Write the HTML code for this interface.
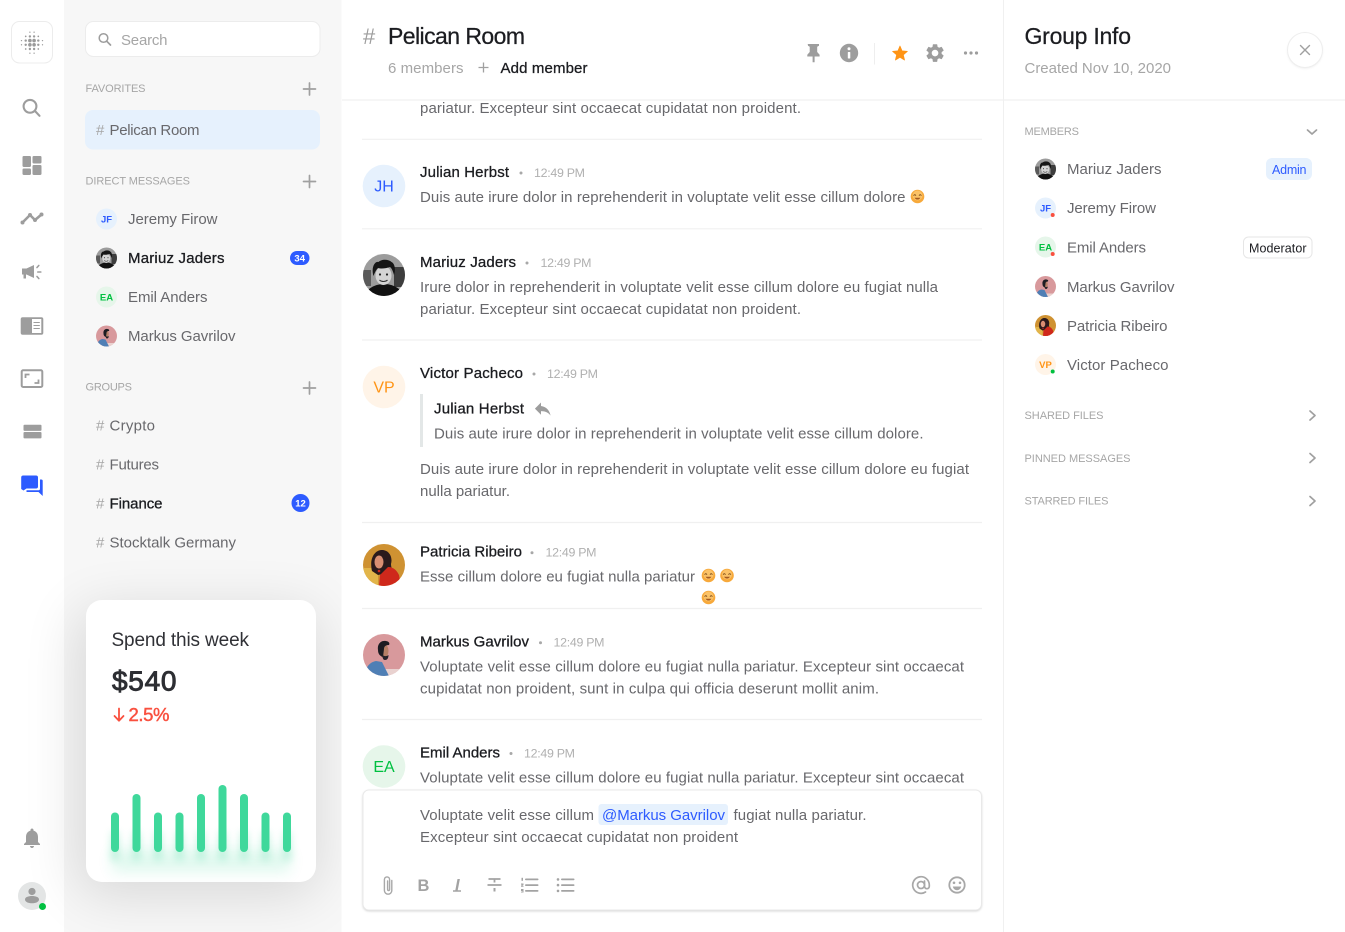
<!DOCTYPE html>
<html lang="en">
<head>
<meta charset="utf-8">
<title>Pelican Room</title>
<style>
html,body{margin:0;padding:0;background:#fff;width:1345px;height:932px;overflow:hidden}
svg{display:block}
text{font-family:"Liberation Sans",sans-serif;white-space:pre}
.b{font-size:15px;fill:#68686c}
.n{font-size:15px;fill:#1b1c20;stroke:#1b1c20;stroke-width:.3}
.t{font-size:12.4px;fill:#b0b0b0}
.l{font-size:11px;fill:#a6a6a6}
.g{font-size:15px;fill:#a6a6a6}
.h{font-size:23px;fill:#1b1c20;stroke:#1b1c20;stroke-width:.25}
.i{fill:#9d9d9d}
.s{fill:none;stroke:#9d9d9d;stroke-width:2.100;stroke-linecap:round;stroke-linejoin:round}
.p{fill:none;stroke:#a0a0a0;stroke-width:1.700;stroke-linecap:round}
.sep{stroke:#f0f0f0;stroke-width:1.2}
.dot{fill:#a8a8a8}
.a{font-size:9.500px;font-weight:bold;text-anchor:middle}
.av{font-size:16px;text-anchor:middle}
</style>
</head>
<body>
<svg width="1345" height="932" viewBox="0 0 1345 932" xmlns="http://www.w3.org/2000/svg">
<defs>
  <filter id="cs" filterUnits="userSpaceOnUse" x="-100" y="420" width="700" height="700"><feGaussianBlur stdDeviation="28"/></filter>
  <filter id="gl" filterUnits="userSpaceOnUse" x="60" y="760" width="280" height="160"><feGaussianBlur stdDeviation="7"/></filter>
  <filter id="gs" filterUnits="userSpaceOnUse" x="60" y="760" width="280" height="160"><feGaussianBlur stdDeviation="4"/></filter>
  <filter id="cp" filterUnits="userSpaceOnUse" x="340" y="770" width="660" height="160"><feGaussianBlur stdDeviation="1.2"/></filter>
  <filter id="cb" filterUnits="userSpaceOnUse" x="1270" y="20" width="70" height="70"><feGaussianBlur stdDeviation="1.2"/></filter>
  <clipPath id="cc"><rect x="86" y="600" width="230" height="282" rx="16"/></clipPath>
  <clipPath id="ca"><circle cx="21" cy="21" r="21"/></clipPath>
  <symbol id="mj" viewBox="0 0 42 42"><g clip-path="url(#ca)">
    <rect width="42" height="42" fill="#9c9c9c"/>
    <rect x="31" y="13" width="11" height="20" fill="#3d3d3d"/>
    <rect x="0" y="16" width="8" height="16" fill="#5a5a5a"/>
    <ellipse cx="21" cy="45" rx="20" ry="15" fill="#111"/>
    <ellipse cx="20.500" cy="21.500" rx="8" ry="9.500" fill="#d4d4d4"/>
    <path d="M10.500 22c-2.500-8 1-15 5-14 3-3 10-3 13 0 4 2 4 9 2.500 13-1-4-2.500-7-4-8-4 1.500-9 2-12 1-2 2-3.500 5-4.500 8z" fill="#151515"/>
    <circle cx="17" cy="20.500" r="1.100" fill="#222"/><circle cx="24" cy="20.500" r="1.100" fill="#222"/>
    <path d="M16.500 26c2 2 6 2 8 0" fill="none" stroke="#333" stroke-width="1.100"/>
  </g></symbol>
  <symbol id="mg" viewBox="0 0 42 42"><g clip-path="url(#ca)">
    <rect width="42" height="42" fill="#d8999c"/>
    <rect y="35" width="42" height="7" fill="#e9d2d0"/>
    <path d="M2 42c0-9 5-14 11-15l6 1 7 14z" fill="#4f7fb5"/>
    <ellipse cx="21" cy="17" rx="4.500" ry="7" fill="#b57f66"/>
    <path d="M15 16c-1-6 3-10 8-9 3 .5 4 2 3 4-3.500 0-5 1.500-5 4l-1 8c-3-1-5-3-5-7z" fill="#1c1c22"/>
    <path d="M19.500 21c2 1.500 4 1.500 6 0 0 3.500-1.500 5-3.500 5s-2.500-2-2.500-5z" fill="#26222a"/>
  </g></symbol>
  <symbol id="pr" viewBox="0 0 42 42"><g clip-path="url(#ca)">
    <rect width="42" height="42" fill="#cf9232"/>
    <rect x="0" y="24" width="15" height="18" fill="#e2b54a"/>
    <path d="M9 27C6 14 12 6 19 6s11 7 9 14c0 4 2 6 1 8l-14 3z" fill="#2b1a1c"/>
    <ellipse cx="16" cy="18" rx="4.500" ry="6.500" fill="#d98e72"/>
    <path d="M16 42l1-11 8-8c6 0 9 4 11 8l2 11z" fill="#cf281b"/>
    <circle cx="16" cy="27" r="1.300" fill="#cf281b"/>
  </g></symbol>
  <symbol id="em" viewBox="0 0 14 14">
    <circle cx="7" cy="7" r="6.800" fill="#f7a93b"/>
    <circle cx="7" cy="6" r="5" fill="#fbc267"/>
    <path d="M3.300 5.900c.5-1 1.500-1 2 0M8.700 5.900c.5-1 1.500-1 2 0" fill="none" stroke="#7a4a18" stroke-width=".9" stroke-linecap="round"/>
    <path d="M4 8.200c1.500 2.400 4.500 2.400 6 0z" fill="#a45a20"/>
  </symbol>
</defs>

<!-- backgrounds -->
<rect width="1345" height="932" fill="#fff"/>
<rect x="64" width="277.500" height="932" fill="#f7f7f7"/>
<!-- card shadow -->
<rect x="78" y="610" width="240" height="285" rx="20" fill="#000" opacity=".125" filter="url(#cs)"/>
<rect x="341.500" width="662" height="932" fill="#fff"/>
<rect x="1003.500" width="342" height="932" fill="#fff"/>
<line x1="1003.500" y1="0" x2="1003.500" y2="932" stroke="#f0f0f0"/>
<line x1="342" y1="100" x2="1345" y2="100" stroke="#f0f0f0" stroke-width="1.300"/>

<!-- rail -->
<rect x="11.500" y="21.500" width="41" height="41.500" rx="8" fill="#fff" stroke="#ececec"/>
<g fill="#9a9a9a">
  <circle cx="29.900" cy="40.600" r="1.800"/><circle cx="34.100" cy="40.600" r="1.800"/><circle cx="29.900" cy="44.800" r="1.800"/><circle cx="34.100" cy="44.800" r="1.800"/>
  <circle cx="25.700" cy="40.600" r="1.200"/><circle cx="38.300" cy="40.600" r="1.200"/><circle cx="25.700" cy="44.800" r="1.200"/><circle cx="38.300" cy="44.800" r="1.200"/>
  <circle cx="29.900" cy="36.400" r="1.200"/><circle cx="34.100" cy="36.400" r="1.200"/><circle cx="29.900" cy="49" r="1.200"/><circle cx="34.100" cy="49" r="1.200"/>
  <circle cx="25.700" cy="36.400" r=".85"/><circle cx="38.300" cy="36.400" r=".85"/><circle cx="25.700" cy="49" r=".85"/><circle cx="38.300" cy="49" r=".85"/>
  <circle cx="21.500" cy="40.600" r=".65"/><circle cx="42.500" cy="40.600" r=".65"/><circle cx="21.500" cy="44.800" r=".65"/><circle cx="42.500" cy="44.800" r=".65"/>
  <circle cx="29.900" cy="32.200" r=".65"/><circle cx="34.100" cy="32.200" r=".65"/><circle cx="29.900" cy="53.200" r=".65"/><circle cx="34.100" cy="53.200" r=".65"/>
</g>
<!-- search -->
<circle cx="30" cy="106.300" r="6.400" class="s"/><line x1="35" y1="111" x2="39.500" y2="115.800" class="s"/>
<!-- dashboard -->
<g class="i"><rect x="22.500" y="156" width="8.500" height="11" rx="1.200"/><rect x="32.500" y="156" width="9" height="7.500" rx="1.200"/><rect x="22.500" y="168.500" width="8.500" height="6.500" rx="1.200"/><rect x="32.500" y="165" width="9" height="10" rx="1.200"/></g>
<!-- trend -->
<polyline points="22.500,222.500 30,215 35,220 41.500,214.500" fill="none" stroke="#9d9d9d" stroke-width="2.600" stroke-linejoin="round"/>
<g class="i"><circle cx="22.500" cy="222.500" r="2"/><circle cx="30" cy="215" r="2"/><circle cx="35" cy="220" r="2"/><circle cx="41.500" cy="214.500" r="2"/></g>
<!-- megaphone -->
<path d="M22 268.500h4.500l7.500-3.500v13l-7.500-3.500h-.5v4h-2.500v-4h-1.500z" class="i"/>
<path d="M37 267.500l1.800-2M37.800 272h3M37 276.500l1.800 2" fill="none" stroke="#9d9d9d" stroke-width="1.600" stroke-linecap="round"/>
<!-- panel -->
<rect x="20.700" y="317.300" width="22.600" height="17.400" rx="2" class="i"/>
<rect x="32" y="319" width="9.300" height="14" fill="#fff"/>
<path d="M33.500 322.500h6.300M33.500 325.500h6.300M33.500 328.500h6.300" stroke="#9d9d9d" stroke-width="1.100"/>
<!-- frame -->
<rect x="21.700" y="370.300" width="20.600" height="16.700" rx="1.500" fill="none" stroke="#9d9d9d" stroke-width="2"/>
<path d="M25.500 378v-3.500h4M38.500 379.500v3.500h-4" fill="none" stroke="#9d9d9d" stroke-width="1.800"/>
<!-- stack -->
<rect x="23.500" y="424.700" width="18" height="6.200" rx="1" class="i"/><rect x="23.500" y="432" width="18" height="6.400" rx="1" class="i"/>
<!-- chat -->
<path d="M23.500 475.500h12.500a2 2 0 0 1 2 2v9a2 2 0 0 1-2 2h-9.500l-3 2-2.300-1.500v-11.500a2 2 0 0 1 2-2z" fill="#2d5bff"/>
<path d="M40 479.500h1.300a1.400 1.400 0 0 1 1.400 1.400V496l-4.200-4H26.500v-1.700h11.800a1.700 1.700 0 0 0 1.700-1.700z" fill="#2d5bff"/>
<!-- bell -->
<path transform="translate(20 826)" class="i" d="M12 22c1.100 0 2-.9 2-2h-4c0 1.100.89 2 2 2zm6-6v-5c0-3.070-1.640-5.640-4.500-6.320V4c0-.83-.67-1.500-1.500-1.500s-1.500.67-1.500 1.500v.68C7.630 5.360 6 7.920 6 11v5l-2 2v1h16v-1l-2-2z"/>
<!-- profile -->
<circle cx="32" cy="896" r="14" fill="#e3e5e5"/>
<circle cx="32" cy="891.500" r="3.600" class="i"/><path d="M25 899.500c0-2.500 3.500-3.500 7-3.500s7 1 7 3.500-3.500 3.800-7 3.800-7-1.300-7-3.800z" class="i"/>
<circle cx="42.500" cy="906.500" r="3.500" fill="#00c040"/>

<!-- sidebar -->
<rect x="85.500" y="21.500" width="234.500" height="35" rx="8" fill="#fff" stroke="#ececec"/>
<circle cx="103.500" cy="38" r="4.300" fill="none" stroke="#9d9d9d" stroke-width="1.500"/><line x1="106.800" y1="41.300" x2="110.500" y2="45" stroke="#9d9d9d" stroke-width="1.700" stroke-linecap="round"/>
<text x="121" y="44.800" textLength="46.500" class="g">Search</text>

<text x="85.500" y="92" textLength="60" class="l">FAVORITES</text>
<path d="M303.500 89h12M309.500 83v12" class="p"/>
<rect x="85" y="110" width="235" height="39.500" rx="8" fill="#e6f1fd"/>
<text x="96" y="135" textLength="8.500" class="g">#</text>
<text x="109.500" y="135" textLength="90" class="b">Pelican Room</text>

<text x="85.500" y="184.600" textLength="104.500" class="l">DIRECT MESSAGES</text>
<path d="M303.500 181.500h12M309.500 175.500v12" class="p"/>
<circle cx="106.500" cy="219" r="10.500" fill="#e6f1fd"/><text x="106.500" y="222.300" class="a" fill="#2d5bff">JF</text>
<text x="128" y="224" textLength="89.500" class="b">Jeremy Firow</text>
<use href="#mj" x="96" y="247.500" width="21" height="21"/>
<text x="128" y="263" textLength="96.500" class="n">Mariuz Jaders</text>
<rect x="290" y="251" width="19.500" height="14" rx="7" fill="#2d5bff"/><text x="299.700" y="261.300" class="a" fill="#fff">34</text>
<circle cx="106.500" cy="297" r="10.500" fill="#e6f6ea"/><text x="106.500" y="300.300" class="a" fill="#00c040">EA</text>
<text x="128" y="302" textLength="79.500" class="b">Emil Anders</text>
<use href="#mg" x="96" y="325.500" width="21" height="21"/>
<text x="128" y="341" textLength="107.500" class="b">Markus Gavrilov</text>

<text x="85.500" y="390.600" textLength="46.500" class="l">GROUPS</text>
<path d="M303.500 388h12M309.500 382v12" class="p"/>
<text x="96" y="430.300" textLength="8.500" class="g">#</text><text x="96" y="469.400" textLength="8.500" class="g">#</text><text x="96" y="508.500" textLength="8.500" class="g">#</text><text x="96" y="547.600" textLength="8.500" class="g">#</text>
<text x="109.500" y="430.300" textLength="45.500" class="b">Crypto</text>
<text x="109.500" y="469.400" textLength="49.500" class="b">Futures</text>
<text x="109.500" y="508.500" textLength="53" class="n">Finance</text>
<circle cx="300.500" cy="503" r="9" fill="#2d5bff"/><text x="300.500" y="506.300" class="a" fill="#fff">12</text>
<text x="109.500" y="547.600" textLength="126.500" class="b">Stocktalk Germany</text>

<!-- card -->
<rect x="86" y="600" width="230" height="282" rx="16" fill="#fff"/>
<text x="111.500" y="646" textLength="137.500" style="font-size:19px;fill:#303136">Spend this week</text>
<text x="112" y="690.500" textLength="64.500" style="font-size:28px;fill:#2d2e33;stroke:#2d2e33;stroke-width:.9">$540</text>
<path d="M119 708.500v12M114.500 716l4.500 4.700 4.500-4.700" fill="none" stroke="#f9503f" stroke-width="1.800" stroke-linecap="round" stroke-linejoin="round"/>
<text x="128.500" y="721" textLength="41" style="font-size:18.500px;fill:#f9503f;stroke:#f9503f;stroke-width:.45">2.5%</text>
<g clip-path="url(#cc)">
  <rect x="112" y="850" width="178" height="22" fill="#3fd89b" opacity=".16" filter="url(#gl)"/>
  <g filter="url(#gs)" fill="#3fd89b" opacity=".28">
    <rect x="111" y="832" width="8" height="28"/><rect x="132.500" y="832" width="8" height="28"/><rect x="154" y="832" width="8" height="28"/><rect x="175.500" y="832" width="8" height="28"/><rect x="197" y="832" width="8" height="28"/><rect x="218.500" y="832" width="8" height="28"/><rect x="240" y="832" width="8" height="28"/><rect x="261.500" y="832" width="8" height="28"/><rect x="283" y="832" width="8" height="28"/>
  </g>
</g>
<g fill="#3fd89b">
  <rect x="111" y="812.500" width="8" height="39.500" rx="4"/><rect x="132.500" y="794" width="8" height="58" rx="4"/><rect x="154" y="812.500" width="8" height="39.500" rx="4"/><rect x="175.500" y="812.500" width="8" height="39.500" rx="4"/><rect x="197" y="794" width="8" height="58" rx="4"/><rect x="218.500" y="785" width="8" height="67" rx="4"/><rect x="240" y="794" width="8" height="58" rx="4"/><rect x="261.500" y="812.500" width="8" height="39.500" rx="4"/><rect x="283" y="812.500" width="8" height="39.500" rx="4"/>
</g>

<!-- header -->
<text x="363" y="44" textLength="13" style="font-size:22px;fill:#9d9d9d">#</text>
<text x="388" y="44" textLength="137" class="h">Pelican Room</text>
<text x="388" y="73" textLength="75.500" class="g">6 members</text>
<path d="M478.500 67.500h10M483.500 62.500v10" fill="none" stroke="#a0a0a0" stroke-width="1.300"/>
<text x="500.500" y="73" textLength="87" class="n">Add member</text>
<path d="M808 44h11.300v1.700l-1.800 1v5.300l2.400 2.800v1.700h-5v5.700h-2v-5.700h-5.300v-1.700l2.400-2.800v-5.300l-1.700-1z" transform="translate(-.3 0)" class="i"/>
<circle cx="849" cy="53" r="9.200" class="i"/>
<rect x="847.800" y="52" width="2.500" height="6.500" rx=".5" fill="#fff"/><circle cx="849" cy="48.800" r="1.500" fill="#fff"/>
<line x1="874.500" y1="43" x2="874.500" y2="64.500" stroke="#eeeeee"/>
<path transform="translate(891.100 44.500) scale(.74)" fill="#ff9415" stroke="#ff9415" stroke-width="1" stroke-linejoin="round" d="M12 17.270L18.180 21l-1.640-7.030L22 9.240l-7.190-.61L12 2 9.190 8.630 2 9.240l5.460 4.730L5.820 21z"/>
<path transform="translate(924 42) scale(.92)" class="i" d="M19.140 12.940c.04-.3.060-.61.060-.94 0-.32-.02-.64-.07-.94l2.030-1.580c.18-.14.230-.41.120-.61l-1.920-3.320c-.12-.22-.37-.29-.59-.22l-2.390.96c-.5-.38-1.030-.7-1.620-.94l-.36-2.540c-.04-.24-.24-.41-.48-.41h-3.840c-.24 0-.43.170-.47.410l-.36 2.540c-.59.240-1.130.570-1.620.940l-2.390-.96c-.22-.08-.47 0-.59.220L2.740 8.870c-.12.210-.08.470.120.610l2.030 1.580c-.05.300-.09.630-.09.940s.02.640.07.940l-2.030 1.580c-.18.140-.23.410-.12.610l1.920 3.320c.12.220.37.290.59.220l2.390-.96c.5.380 1.030.7 1.620.94l.36 2.540c.05.240.24.410.48.410h3.840c.24 0 .44-.17.47-.41l.36-2.540c.59-.24 1.130-.56 1.620-.94l2.390.96c.22.080.47 0 .59-.22l1.920-3.320c.12-.22.070-.47-.12-.61l-2.010-1.580zM12 15.600c-1.980 0-3.600-1.620-3.600-3.600s1.620-3.600 3.600-3.600 3.600 1.620 3.600 3.600-1.620 3.600-3.600 3.600z"/>
<g class="i"><circle cx="965.500" cy="53" r="1.600"/><circle cx="971" cy="53" r="1.600"/><circle cx="976.500" cy="53" r="1.600"/></g>

<!-- messages -->
<text x="420" y="113" textLength="381" class="b">pariatur. Excepteur sint occaecat cupidatat non proident.</text>
<line x1="362" y1="139.300" x2="982" y2="139.300" class="sep"/>

<circle cx="384" cy="186" r="21.300" fill="#e6f1fd"/><text x="384" y="191.500" class="av" fill="#2d5bff">JH</text>
<text x="420" y="177" textLength="89" class="n">Julian Herbst</text><circle cx="521" cy="173" r="1.500" class="dot"/><text x="534" y="177" textLength="51" class="t">12:49 PM</text>
<text x="420" y="202" textLength="485.500" class="b">Duis aute irure dolor in reprehenderit in voluptate velit esse cillum dolore</text>
<use href="#em" x="910.500" y="189.500" width="14" height="14"/>
<line x1="362" y1="228.800" x2="982" y2="228.800" class="sep"/>

<use href="#mj" x="363" y="254" width="42" height="42"/>
<text x="420" y="267" textLength="96" class="n">Mariuz Jaders</text><circle cx="527" cy="263" r="1.500" class="dot"/><text x="540.500" y="267" textLength="51" class="t">12:49 PM</text>
<text x="420" y="292" textLength="518" class="b">Irure dolor in reprehenderit in voluptate velit esse cillum dolore eu fugiat nulla</text>
<text x="420" y="314" textLength="381" class="b">pariatur. Excepteur sint occaecat cupidatat non proident.</text>
<line x1="362" y1="340" x2="982" y2="340" class="sep"/>

<circle cx="384" cy="387" r="21.300" fill="#fff4e8"/><text x="384" y="392.500" class="av" fill="#ff9415">VP</text>
<text x="420" y="378" textLength="103" class="n">Victor Pacheco</text><circle cx="534" cy="374" r="1.500" class="dot"/><text x="547" y="378" textLength="51" class="t">12:49 PM</text>
<rect x="420" y="394" width="3" height="53" fill="#e3e7e7"/>
<text x="434" y="413.500" textLength="90" class="n">Julian Herbst</text>
<path transform="translate(532.300 398.200) scale(.87)" class="i" d="M10 9V5l-7 7 7 7v-4.100c5 0 8.500 1.600 11 5.100-1-5-4-10-11-11z"/>
<text x="434" y="438.500" textLength="489.500" class="b">Duis aute irure dolor in reprehenderit in voluptate velit esse cillum dolore.</text>
<text x="420" y="474" textLength="549" class="b">Duis aute irure dolor in reprehenderit in voluptate velit esse cillum dolore eu fugiat</text>
<text x="420" y="496" textLength="90" class="b">nulla pariatur.</text>
<line x1="362" y1="522.500" x2="982" y2="522.500" class="sep"/>

<use href="#pr" x="363" y="544" width="42" height="42"/>
<text x="420" y="556.700" textLength="102" class="n">Patricia Ribeiro</text><circle cx="532" cy="552.700" r="1.500" class="dot"/><text x="545.500" y="556.700" textLength="51" class="t">12:49 PM</text>
<text x="420" y="581.700" textLength="275" class="b">Esse cillum dolore eu fugiat nulla pariatur</text>
<use href="#em" x="701.500" y="568.500" width="14" height="14"/><use href="#em" x="720" y="568.500" width="14" height="14"/><use href="#em" x="701.500" y="590.500" width="14" height="14"/>
<line x1="362" y1="608.500" x2="982" y2="608.500" class="sep"/>

<use href="#mg" x="363" y="634" width="42" height="42"/>
<text x="420" y="646.700" textLength="109" class="n">Markus Gavrilov</text><circle cx="540.500" cy="642.700" r="1.500" class="dot"/><text x="553.500" y="646.700" textLength="51" class="t">12:49 PM</text>
<text x="420" y="671.700" textLength="544" class="b">Voluptate velit esse cillum dolore eu fugiat nulla pariatur. Excepteur sint occaecat</text>
<text x="420" y="693.700" textLength="459" class="b">cupidatat non proident, sunt in culpa qui officia deserunt mollit anim.</text>
<line x1="362" y1="719.500" x2="982" y2="719.500" class="sep"/>

<circle cx="384" cy="766.500" r="21.300" fill="#e6f6ea"/><text x="384" y="772" class="av" fill="#00c040">EA</text>
<text x="420" y="757.500" textLength="80" class="n">Emil Anders</text><circle cx="511" cy="753.500" r="1.500" class="dot"/><text x="524" y="757.500" textLength="51" class="t">12:49 PM</text>
<text x="420" y="782.500" textLength="544" class="b">Voluptate velit esse cillum dolore eu fugiat nulla pariatur. Excepteur sint occaecat</text>

<!-- composer -->
<rect x="363" y="791" width="618.500" height="120" rx="6" fill="#000" opacity=".22" filter="url(#cp)"/>
<rect x="363" y="790" width="618.500" height="120" rx="6" fill="#fff" stroke="#e9e9e9"/>
<text x="420" y="820" textLength="174" class="b">Voluptate velit esse cillum</text>
<rect x="598.500" y="804" width="129.500" height="21" rx="3" fill="#e6f1fd"/>
<text x="602" y="820" textLength="123" class="b" style="fill:#2d5bff">@Markus Gavrilov</text>
<text x="733.500" y="820" textLength="133" class="b">fugiat nulla pariatur.</text>
<text x="420" y="842" textLength="318" class="b">Excepteur sint occaecat cupidatat non proident</text>
<!-- toolbar -->
<path d="M391.800 880.500v10a3.700 3.700 0 0 1-7.400 0v-11a2.600 2.600 0 0 1 5.200 0v10a1 1 0 0 1-2 0v-8.500" fill="none" stroke="#a8a8a8" stroke-width="1.400" stroke-linecap="round"/>
<text x="417.500" y="891" style="font-size:16.500px;font-weight:bold;fill:#a3a3a3">B</text>
<text x="455" y="890.500" style="font-size:16.500px;font-weight:bold;font-style:italic;fill:#a3a3a3">I</text>
<path d="M453 891h8" stroke="#a3a3a3" stroke-width="1.500"/>
<path d="M488.500 879h12M494.500 879v3.500M487.500 885h14" fill="none" stroke="#a3a3a3" stroke-width="1.800"/><rect x="493.500" y="888" width="2" height="3.500" fill="#a3a3a3"/>
<g fill="#a3a3a3"><rect x="521.500" y="877.800" width="1.500" height="3"/><path d="M521 883.500h2.500v1.300l-1.300 1h1.300v.9H521v-1l1.300-1H521z"/><path d="M521 889h2.500v3.500H521v-.8h1.500v-.6H521z"/>
<rect x="525" y="878.500" width="13.500" height="1.800" rx=".9"/><rect x="525" y="884.200" width="13.500" height="1.800" rx=".9"/><rect x="525" y="890" width="13.500" height="1.800" rx=".9"/>
<circle cx="558" cy="879.400" r="1.300"/><circle cx="558" cy="885.100" r="1.300"/><circle cx="558" cy="890.900" r="1.300"/>
<rect x="561" y="878.500" width="13.500" height="1.800" rx=".9"/><rect x="561" y="884.200" width="13.500" height="1.800" rx=".9"/><rect x="561" y="890" width="13.500" height="1.800" rx=".9"/></g>
<circle cx="921" cy="885" r="3.500" fill="none" stroke="#a8a8a8" stroke-width="1.700"/>
<path d="M924.500 881v5.300a2.400 2.400 0 0 0 4.800 0V885a8.300 8.300 0 1 0-3.800 7" fill="none" stroke="#a8a8a8" stroke-width="1.700" stroke-linecap="round"/>
<circle cx="957" cy="885" r="7.700" fill="none" stroke="#a8a8a8" stroke-width="1.800"/>
<circle cx="954" cy="882.800" r="1.300" fill="#a8a8a8"/><circle cx="960" cy="882.800" r="1.300" fill="#a8a8a8"/>
<path d="M952.800 886.500h8.400c-.5 2.500-2.200 3.700-4.200 3.700s-3.700-1.200-4.200-3.700z" fill="#a8a8a8"/>

<!-- right panel -->
<text x="1024.500" y="44" textLength="106.500" class="h">Group Info</text>
<text x="1024.500" y="73" textLength="146.500" class="g">Created Nov 10, 2020</text>
<circle cx="1305" cy="51" r="17.500" fill="#000" opacity=".07" filter="url(#cb)"/>
<circle cx="1305" cy="50" r="17.500" fill="#fff" stroke="#eeeeee"/>
<path d="M1300.500 45.500l9 9M1309.500 45.500l-9 9" stroke="#a0a0a0" stroke-width="1.400" stroke-linecap="round"/>

<text x="1024.500" y="134.800" textLength="54.500" class="l">MEMBERS</text>
<path d="M1307.500 130l4.500 4 4.500-4" fill="none" stroke="#a0a0a0" stroke-width="1.700" stroke-linecap="round" stroke-linejoin="round"/>

<use href="#mj" x="1035" y="158.500" width="21" height="21"/>
<text x="1067" y="174" textLength="94.500" class="b">Mariuz Jaders</text>
<rect x="1266" y="158" width="46" height="22" rx="6" fill="#e6f1fd"/>
<text x="1272" y="174" textLength="34.500" style="font-size:12.500px;fill:#2d5bff">Admin</text>

<circle cx="1045.500" cy="208" r="10.500" fill="#e6f1fd"/><text x="1045.500" y="211.300" class="a" fill="#2d5bff">JF</text>
<circle cx="1052.700" cy="215" r="2" fill="#f9503f"/>
<text x="1067" y="213" textLength="89" class="b">Jeremy Firow</text>

<circle cx="1045.500" cy="247" r="10.500" fill="#e6f6ea"/><text x="1045.500" y="250.300" class="a" fill="#00c040">EA</text>
<circle cx="1052.700" cy="254" r="2" fill="#f9503f"/>
<text x="1067" y="252.500" textLength="79" class="b">Emil Anders</text>
<rect x="1243.500" y="237" width="68.500" height="21" rx="5" fill="#fff" stroke="#e6e6e6"/>
<text x="1249" y="252.300" textLength="57.500" style="font-size:12.500px;fill:#1b1c20">Moderator</text>

<use href="#mg" x="1035" y="276" width="21" height="21"/>
<text x="1067" y="292" textLength="107.500" class="b">Markus Gavrilov</text>

<use href="#pr" x="1035" y="315" width="21" height="21"/>
<text x="1067" y="331" textLength="100.500" class="b">Patricia Ribeiro</text>

<circle cx="1045.500" cy="364.500" r="10.500" fill="#fff4e8"/><text x="1045.500" y="367.800" class="a" fill="#ff9415">VP</text>
<circle cx="1052.700" cy="371.500" r="2" fill="#00c040"/>
<text x="1067" y="370" textLength="101.500" class="b">Victor Pacheco</text>

<text x="1024.500" y="419" textLength="79" class="l">SHARED FILES</text>
<path d="M1310 411l5 4.500-5 4.500" fill="none" stroke="#a0a0a0" stroke-width="1.700" stroke-linecap="round" stroke-linejoin="round"/>
<text x="1024.500" y="462" textLength="106" class="l">PINNED MESSAGES</text>
<path d="M1310 453.500l5 4.500-5 4.500" fill="none" stroke="#a0a0a0" stroke-width="1.700" stroke-linecap="round" stroke-linejoin="round"/>
<text x="1024.500" y="504.500" textLength="84" class="l">STARRED FILES</text>
<path d="M1310 496.500l5 4.500-5 4.500" fill="none" stroke="#a0a0a0" stroke-width="1.700" stroke-linecap="round" stroke-linejoin="round"/>
</svg>
</body>
</html>
